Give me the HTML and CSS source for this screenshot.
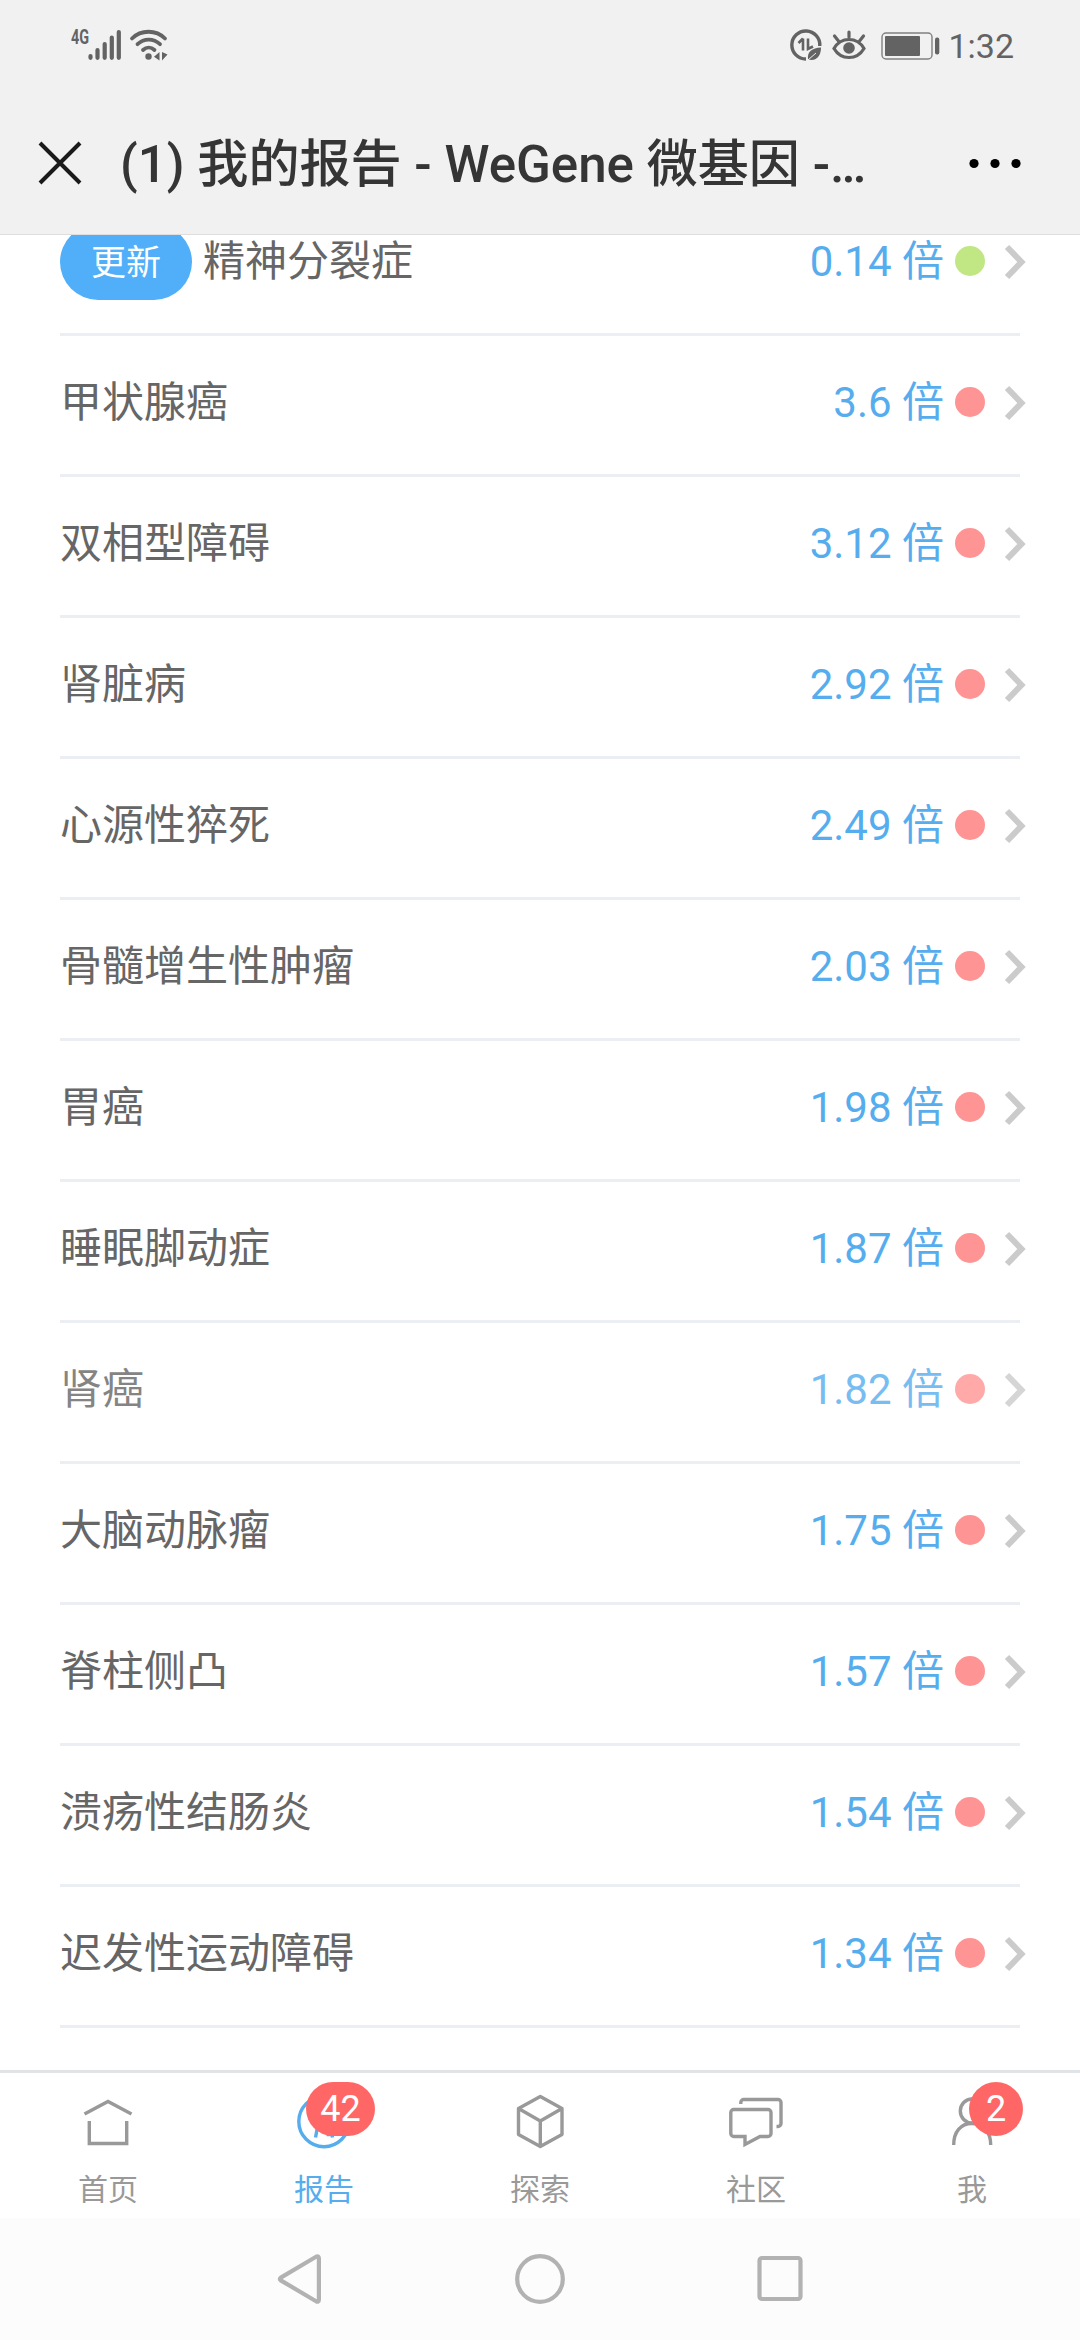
FILE: index.html
```html
<!DOCTYPE html>
<html lang="zh-CN">
  <head>
    <meta charset="UTF-8" />
    <meta name="viewport" content="width=device-width, initial-scale=1.0" />
    <title>(1) 我的报告 - WeGene 微基因</title>
    <link rel="stylesheet" href="styles.css">
  </head>
  <body>
    <svg class="defs">
      <symbol id="arrow" viewBox="0 0 22 36">
        <path d="M3 3L17.5 18L3 33" fill="none" stroke="#cbcbcb" stroke-width="6" />
      </symbol>
    </svg>
    <header>
      <div class="status">
        <div class="status-left">
          <span class="net">4G</span>
          <svg class="signal" width="34" height="34" viewBox="0 0 34 34" stroke="#636363" stroke-width="4.2" stroke-linecap="round">
            <path d="M2.5 28v1.8M9.5 22v7.8M16.7 16v13.8M23.8 9.5v20.3M30.8 4v25.8" />
          </svg>
          <svg class="wifi" width="40" height="34" viewBox="0 0 40 34" fill="none" stroke="#636363" stroke-width="3.8" stroke-linecap="round">
            <path d="M3 10.5C12 1.5 27 1.5 36 10.5M8.5 16.2C15 10 24.5 10 31 16.2M14 22C17.5 18.8 22 18.8 25.5 22" />
            <circle cx="19.5" cy="28.5" r="3.2" fill="#636363" stroke="none" />
            <path d="M30.5 24v8.5l-5.5-3.7zM33 24v8.5l5.5-6z" fill="#636363" stroke="none" />
          </svg>
        </div>
        <div class="status-right">
          <svg width="32" height="34" viewBox="0 0 32 34" fill="none" stroke="#636363">
            <path d="M29.8 18A14 14 0 1 0 16 31" stroke-width="3.4" />
            <path d="M13 10.5v12M13 10.5l-4.5 4.5M18 10.5v10.5l5-2.5" stroke-width="2.6" />
            <path d="M18 31.5c-1-8 4-11.5 13-12c0 8-4 14-13 12z" fill="#636363" stroke="none" />
            <path d="M18 32l8-7" stroke="#f1f1f1" stroke-width="1" />
          </svg>
          <svg class="eye" width="34" height="34" viewBox="0 0 34 34" fill="none" stroke="#636363" stroke-width="3.2" stroke-linecap="round">
            <path d="M2 20.5C9 8.5 25 8.5 32 20.5C25 32.5 9 32.5 2 20.5z" />
            <path d="M17 4v5M2.5 8l4 5M31.5 8l-4 5" />
            <circle cx="17" cy="20" r="5.8" fill="#636363" stroke="none" />
          </svg>
          <svg class="battery" width="60" height="34" viewBox="0 0 60 34">
            <rect x="1" y="5" width="50" height="26" rx="4" fill="none" stroke="#808080" stroke-width="1.4" />
            <rect x="4" y="8" width="35" height="20" rx="1" fill="#636363" />
            <rect x="54" y="9.5" width="4.3" height="17" rx="2" fill="#636363" />
          </svg>
          <span class="time">1:32</span>
        </div>
      </div>
      <div class="title-bar">
        <svg width="44" height="44" viewBox="0 0 44 44" stroke="#1a1a1a" stroke-width="4">
          <path d="M2 2L42 42M42 2L2 42" />
        </svg>
        <h1>(1) 我的报告 - WeGene 微基因 -…</h1>
        <svg width="54" height="12" viewBox="0 0 54 12">
          <circle cx="6" cy="6.5" r="4.6" />
          <circle cx="27" cy="6.5" r="4.6" />
          <circle cx="48" cy="6.5" r="4.6" />
        </svg>
      </div>
    </header>

    <main>
      <ul class="list">
        <li><span class="update">更新</span><span class="name">精神分裂症</span><span class="times">0.14 倍</span><i class="dot low"></i><svg class="arrow"><use href="#arrow" /></svg></li>
        <li><span class="name">甲状腺癌</span><span class="times">3.6 倍</span><i class="dot"></i><svg class="arrow"><use href="#arrow" /></svg></li>
        <li><span class="name">双相型障碍</span><span class="times">3.12 倍</span><i class="dot"></i><svg class="arrow"><use href="#arrow" /></svg></li>
        <li><span class="name">肾脏病</span><span class="times">2.92 倍</span><i class="dot"></i><svg class="arrow"><use href="#arrow" /></svg></li>
        <li><span class="name">心源性猝死</span><span class="times">2.49 倍</span><i class="dot"></i><svg class="arrow"><use href="#arrow" /></svg></li>
        <li><span class="name">骨髓增生性肿瘤</span><span class="times">2.03 倍</span><i class="dot"></i><svg class="arrow"><use href="#arrow" /></svg></li>
        <li><span class="name">胃癌</span><span class="times">1.98 倍</span><i class="dot"></i><svg class="arrow"><use href="#arrow" /></svg></li>
        <li><span class="name">睡眠脚动症</span><span class="times">1.87 倍</span><i class="dot"></i><svg class="arrow"><use href="#arrow" /></svg></li>
        <li class="read"><span class="name">肾癌</span><span class="times">1.82 倍</span><i class="dot"></i><svg class="arrow"><use href="#arrow" /></svg></li>
        <li><span class="name">大脑动脉瘤</span><span class="times">1.75 倍</span><i class="dot"></i><svg class="arrow"><use href="#arrow" /></svg></li>
        <li><span class="name">脊柱侧凸</span><span class="times">1.57 倍</span><i class="dot"></i><svg class="arrow"><use href="#arrow" /></svg></li>
        <li><span class="name">溃疡性结肠炎</span><span class="times">1.54 倍</span><i class="dot"></i><svg class="arrow"><use href="#arrow" /></svg></li>
        <li><span class="name">迟发性运动障碍</span><span class="times">1.34 倍</span><i class="dot"></i><svg class="arrow"><use href="#arrow" /></svg></li>
      </ul>
    </main>

    <nav class="tabs">
      <a class="tab">
        <svg class="icon" viewBox="0 0 64 64">
          <path d="M8.5 24L32 11.5L55.5 24M13.3 31V53.5H50.7V31" />
        </svg>
        <span>首页</span>
      </a>
      <a class="tab active">
        <svg class="icon" viewBox="0 0 64 64">
          <circle cx="32" cy="31.5" r="25.2" />
          <path d="M23.5 47.5L25.5 37M40.5 47.5L38.5 37M34.5 44.5h5" />
        </svg>
        <b class="badge">42</b>
        <span>报告</span>
      </a>
      <a class="tab">
        <svg class="icon" viewBox="0 0 64 64" stroke-linejoin="round">
          <path d="M32.3 6.5L54 18.5V44.5L32.3 56.5L10.5 44.5V18.5zM10.5 18.5L32.3 31L54 18.5M32.3 31V56.5" />
        </svg>
        <span>探索</span>
      </a>
      <a class="tab">
        <svg class="icon" viewBox="0 0 64 64">
          <path d="M16.8 14V12.5a3 3 0 0 1 3-3H54a3 3 0 0 1 3 3V33.5a3 3 0 0 1-3 3H52.5" />
          <path d="M9.8 19.5H44a3 3 0 0 1 3 3V43.5a3 3 0 0 1-3 3H36L21 54.5V46.5H9.8a3 3 0 0 1-3-3V22.5a3 3 0 0 1 3-3z" />
        </svg>
        <span>社区</span>
      </a>
      <a class="tab">
        <svg class="icon" viewBox="0 0 64 64">
          <ellipse cx="32" cy="21" rx="11.7" ry="12" />
          <path d="M13.7 55C13.7 42 20.5 33.5 32 33.5S50.7 42 50.7 55" />
        </svg>
        <b class="badge one">2</b>
        <span>我</span>
      </a>
    </nav>

    <footer>
      <svg viewBox="0 0 60 60"><path d="M10.8 28.6L46 7.8Q48.9 6.6 48.9 9.6V50.4Q48.9 53.4 46 52.2L10.8 31.4Q9 30 10.8 28.6z" /></svg>
      <svg viewBox="0 0 60 60"><circle cx="30" cy="30" r="22.8" /></svg>
      <svg viewBox="0 0 60 60"><rect x="9.5" y="9" width="41" height="41" rx="2.5" /></svg>
    </footer>
  </body>
</html>
```

FILE: styles.css
```css
* {
  box-sizing: border-box;
  margin: 0;
  padding: 0;
}
body {
  display: flex;
  flex-direction: column;
  width: 1080px;
  height: 2340px;
  overflow: hidden;
  background: #fff;
  font-family: Roboto, "Noto Sans CJK SC", sans-serif;
  color: #666;
}
svg {
  display: block;
  flex: none;
}
.defs {
  display: none;
}
header {
  height: 235px;
  flex: none;
  background: #f1f1f1;
  border-bottom: 1px solid #dedede;
}
.status {
  display: flex;
  justify-content: space-between;
  height: 90px;
  padding: 28px 66px 0 71px;
}
.status-left,
.status-right {
  display: flex;
  height: 34px;
  color: #636363;
}
.net {
  width: 17px;
  font-size: 20px;
  line-height: 18px;
  font-weight: 700;
  transform: scaleX(0.72);
  transform-origin: left;
}
.wifi {
  margin-left: 7px;
}
.eye {
  margin-left: 10px;
}
.battery {
  margin-left: 15px;
}
.time {
  margin-left: 7px;
  font-size: 34px;
  line-height: 36px;
}
.title-bar {
  display: flex;
  align-items: center;
  height: 146px;
  padding: 0 58px 0 38px;
}
.title-bar h1 {
  flex: 1;
  margin: 3px 0 0 38px;
  font-size: 51.1px;
  font-weight: 500;
  line-height: 70px;
  color: #353535;
  white-space: nowrap;
}
main {
  flex: 1;
  overflow: hidden;
}
/* list is scrolled a little under the header */
.list {
  margin-top: -40px;
  padding: 0 60px;
  list-style: none;
}
.list li {
  display: flex;
  align-items: center;
  height: 141px;
  margin-right: -6px;
  padding-bottom: 8px;
  font-size: 42px;
  line-height: 60px;
  background: linear-gradient(#ebeef2, #ebeef2) 0 100% / 960px 3px no-repeat;
}
.read > * {
  opacity: 0.8;
}
.update {
  width: 132px;
  height: 76px;
  margin-right: 11px;
  border-radius: 38px;
  background: #50aff8;
  color: #fff;
  font-size: 35px;
  line-height: 79px;
  text-align: center;
}
.times {
  margin-left: auto;
  color: #56adee;
}
.dot {
  width: 30px;
  height: 30px;
  margin: 0 19px 1px 11px;
  border-radius: 50%;
  background: #ff9494;
}
.dot.low {
  background: #c0e783;
}
.arrow {
  width: 22px;
  height: 36px;
}
.tabs {
  display: grid;
  grid-template-columns: repeat(5, 1fr);
  flex: none;
  height: 148px;
  border-top: 3px solid #e0e4e7;
  background: #fff;
}
.tab {
  position: relative;
  display: flex;
  flex-direction: column;
  align-items: center;
  padding-top: 17px;
  font-size: 30px;
  line-height: 40px;
  color: #999;
}
.tab span {
  margin-top: 16px;
}
.icon {
  width: 64px;
  height: 64px;
  fill: none;
  stroke: currentColor;
  stroke-width: 3.4;
}
.active {
  color: #56adee;
}
.badge {
  position: absolute;
  left: 90px;
  top: 9px;
  width: 69px;
  height: 54px;
  border-radius: 27px;
  background: #ff6767;
  color: #fff;
  font-size: 36px;
  font-weight: 400;
  line-height: 54px;
  text-align: center;
}
.badge.one {
  left: 105px;
  width: 54px;
}
footer {
  display: grid;
  grid-template-columns: repeat(3, 240px);
  justify-content: center;
  justify-items: center;
  flex: none;
  height: 122px;
  padding-top: 31px;
  background: #fcfcfc;
}
footer svg {
  width: 60px;
  height: 60px;
  fill: none;
  stroke: #b2b2b2;
  stroke-width: 4.2;
}
```
